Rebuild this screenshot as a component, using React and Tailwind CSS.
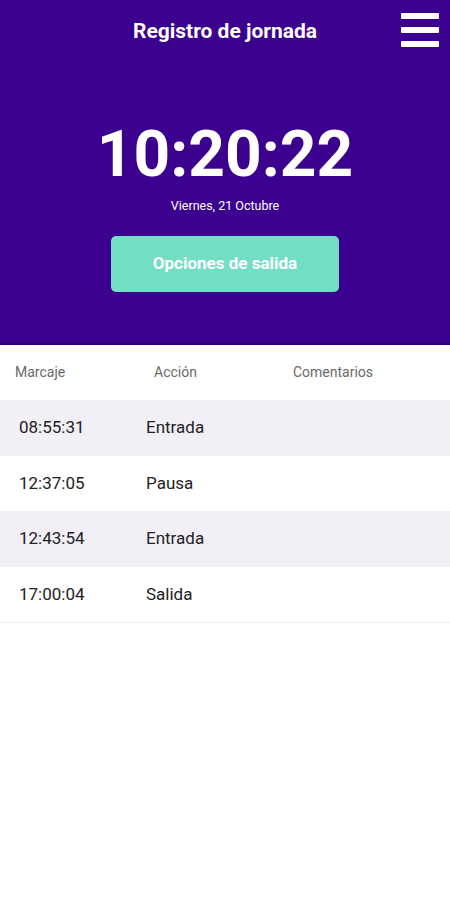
const rows = [
  {time: "08:55:31", action: "Entrada"},
  {time: "12:37:05", action: "Pausa"},
  {time: "12:43:54", action: "Entrada"},
  {time: "17:00:04", action: "Salida"},
];

export default function App() {
  return (
    <div className="w-[450px] h-[900px] bg-white font-['Roboto',sans-serif]">
      {/* Header */}
      <div className="h-[345px] bg-[#3c008e] border-b-2 border-[#2e0078] flex flex-col items-center relative">
        <h1 className="mt-[18px] text-[21px] leading-[26px] font-bold text-white">Registro de jornada</h1>
        <button className="absolute top-[13px] right-[11px] w-[38px] h-[34px] flex flex-col justify-between">
          <span className="block h-[6px] w-full bg-white rounded-[1px]"/>
          <span className="block h-[6px] w-full bg-white rounded-[1px]"/>
          <span className="block h-[6px] w-full bg-white rounded-[1px]"/>
        </button>
        <div className="mt-[79px] text-[64px] leading-[64px] font-bold text-white">10:20:22</div>
        <div className="mt-[12px] text-[12.5px] leading-[14px] text-white">Viernes, 21 Octubre</div>
        <button className="mt-[23px] w-[228px] h-[56px] rounded-[5px] bg-[#72dfc4] text-white text-[17px] font-bold">
          Opciones de salida
        </button>
      </div>

      {/* Table */}
      <div className="h-[55px] flex items-center text-[14px] text-[#6a6a6a]">
        <span className="w-[154px] pl-[15px]">Marcaje</span>
        <span className="w-[139px]">Acción</span>
        <span>Comentarios</span>
      </div>
      <div className="border-b border-[#f0eef4]">
        {rows.map((r, i) => (
          <div key={i} className={`h-[55.5px] flex items-center text-[17px] text-[#222] ${i % 2 === 0 ? "bg-[#f2f0f6]" : "bg-white"}`}>
            <span className="w-[146px] pl-[19px]">{r.time}</span>
            <span>{r.action}</span>
          </div>
        ))}
      </div>
    </div>
  );
}
